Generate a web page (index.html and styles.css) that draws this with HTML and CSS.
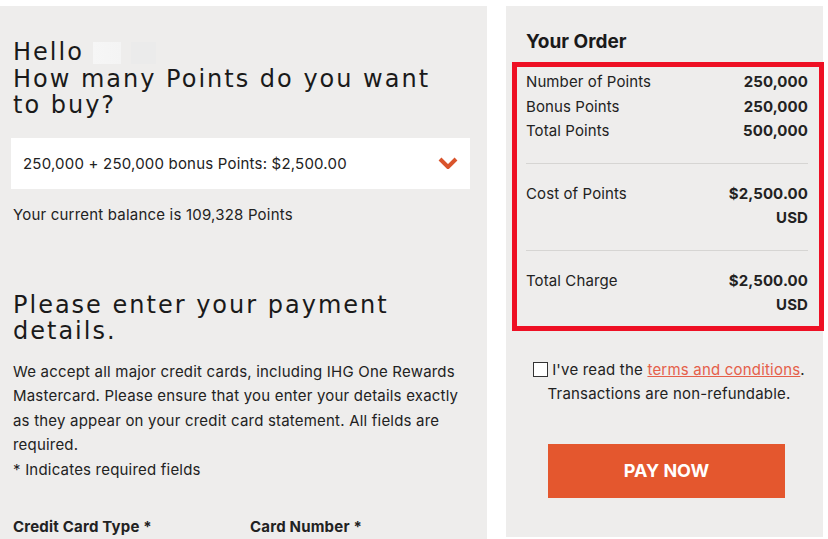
FILE: index.html
```html
<!DOCTYPE html>
<html lang="en">
<head>
  <meta charset="UTF-8" />
  <title>Buy Points</title>
  <link rel="stylesheet" href="styles.css">
</head>
<body>
  <div class="page">
    <div class="main-panel">
      <h1 class="heading">Hello <span class="blur-name"></span><br />How many Points do you want to buy?</h1>

      <div class="points-select">
        <span>250,000 + 250,000 bonus Points: $2,500.00</span>
        <svg class="chevron" width="20" height="12" viewBox="0 0 20 12">
          <path d="M2 2 L10 10 L18 2" fill="none" stroke="#d9542c" stroke-width="4" stroke-linejoin="miter" />
        </svg>
      </div>

      <p class="balance">Your current balance is 109,328 Points</p>

      <h2 class="heading payment-heading">Please enter your payment details.</h2>

      <p class="info">We accept all major credit cards, including IHG One Rewards Mastercard. Please ensure that you enter your details exactly as they appear on your credit card statement. All fields are required.<br />* Indicates required fields</p>

      <div class="field-labels">
        <label>Credit Card Type *</label>
        <label>Card Number *</label>
      </div>
    </div>

    <div class="order-panel">
      <h3 class="order-title">Your Order</h3>

      <div class="order-box">
        <div class="order-group">
          <div class="order-row"><span>Number of Points</span><strong>250,000</strong></div>
          <div class="order-row"><span>Bonus Points</span><strong>250,000</strong></div>
          <div class="order-row"><span>Total Points</span><strong>500,000</strong></div>
        </div>
        <div class="order-group">
          <div class="order-row"><span>Cost of Points</span><strong>$2,500.00<br />USD</strong></div>
        </div>
        <div class="order-group">
          <div class="order-row"><span>Total Charge</span><strong>$2,500.00<br />USD</strong></div>
        </div>
      </div>

      <div class="terms">
        <span class="checkbox"></span>I've read the <a href="#">terms and conditions</a>.<br />Transactions are non-refundable.
      </div>

      <button class="pay-button">PAY NOW</button>
    </div>
  </div>
</body>
</html>
```

FILE: styles.css
```css
html, body {
  margin: 0;
  padding: 0;
  background-color: white;
  color: #222;
  font-family: Inter, "Liberation Sans", sans-serif;
  overflow: hidden;
}

.page {
  display: flex;
  gap: 19px;
  padding-top: 6px;
  height: 539px;
  box-sizing: border-box;
}

.main-panel {
  width: 487px;
  background-color: #eeedec;
  padding: 33px 17px 0 13px;
  box-sizing: border-box;
  letter-spacing: 0.2px;
}

.heading {
  font-family: "DejaVu Sans", sans-serif;
  font-weight: normal;
  font-size: 24px;
  line-height: 26.5px;
  letter-spacing: 2px;
  max-width: 440px;
  margin: 0;
  color: #1a1a1a;
}

.blur-name {
  display: inline-block;
  width: 70px;
  height: 22px;
  background: linear-gradient(90deg, #f6f6f6 0, #f4f4f4 40%, transparent 40%, transparent 55%, #ebebeb 55%, #ebebeb 90%, transparent 90%);
  vertical-align: -4px;
}

.points-select {
  display: flex;
  align-items: center;
  justify-content: space-between;
  background: white;
  height: 51px;
  margin: 19px 0 0 -2px;
  padding: 0 12px 0 12px;
  font-size: 15px;
}

.balance {
  margin: 16px 0 0;
  font-size: 15px;
}

.payment-heading {
  margin-top: 68px;
}

.info {
  margin: 15px 0 0;
  font-size: 15px;
  line-height: 24.5px;
}

.field-labels {
  display: flex;
  margin-top: 35px;
  font-weight: bold;
  font-size: 15px;
}

.field-labels label {
  width: 237px;
  flex-shrink: 0;
}

.order-panel {
  width: 317px;
  background-color: #eeedec;
  padding: 24px 0 0 0;
  box-sizing: border-box;
  height: 531px;
}

.order-title {
  font-size: 19px;
  font-weight: bold;
  margin: 0 0 9px 20px;
  color: #1a1a1a;
}

.order-box {
  border: 5px solid #ee1024;
  margin: 0 0 0 6px;
  width: 312px;
  box-sizing: border-box;
  padding: 3px 11px 8px 9px;
  font-size: 15px;
  line-height: 24.5px;
  letter-spacing: 0.1px;
}

.order-group {
  display: flex;
  flex-direction: column;
  padding: 0 0 19px;
}

.order-group + .order-group {
  border-top: 1px solid #d6d5d3;
  padding-top: 18px;
}

.order-group:last-child {
  padding-bottom: 0;
}

.order-row {
  display: flex;
  justify-content: space-between;
}

.order-row strong {
  text-align: right;
}

.terms {
  margin: 27px 0 0 22px;
  font-size: 15px;
  line-height: 24.5px;
  letter-spacing: 0.2px;
  text-align: center;
  width: 282px;
}

.terms a {
  color: #e5604a;
}

.checkbox {
  display: inline-block;
  width: 13px;
  height: 13px;
  border: 1px solid #333;
  background: white;
  vertical-align: -2px;
  margin-right: 4px;
}

.pay-button {
  display: block;
  margin: 37px 0 0 42px;
  width: 237px;
  height: 54px;
  background-color: #e4572e;
  color: white;
  border: none;
  font-family: Inter, "Liberation Sans", sans-serif;
  font-size: 18px;
  font-weight: bold;
}
```
